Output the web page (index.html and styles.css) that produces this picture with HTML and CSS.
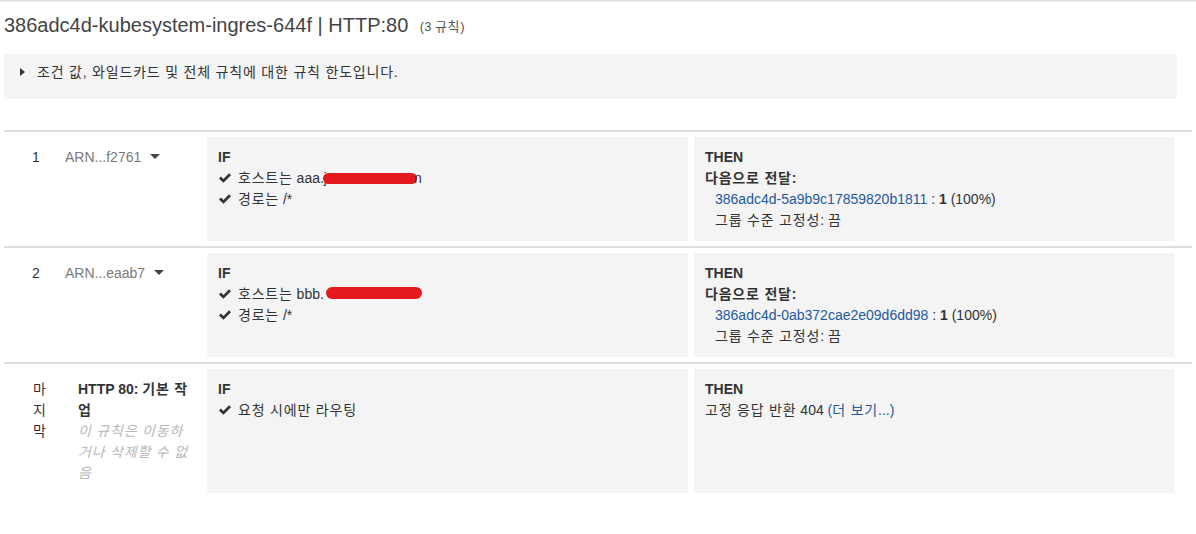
FILE: index.html
```html
<!DOCTYPE html>
<html lang="ko">
<head>
<meta charset="utf-8">
<link rel="stylesheet" href="styles.css">
</head>
<body>
<div class="page">
  <h1 class="title">386adc4d-kubesystem-ingres-644f | HTTP:80 <span class="count">(3 <span class="ko">규칙</span>)</span></h1>
  <div class="info"><span class="tri"></span><span class="ko">조건 값, 와일드카드 및 전체 규칙에 대한 규칙 한도입니다.</span></div>

  <div class="rules">
    <div class="rule">
      <div class="num">1</div>
      <div class="name"><span class="arn">ARN...f2761</span><span class="caret"></span></div>
      <div class="cell">
        <div class="label">IF</div>
        <div class="cond"><svg class="check" viewBox="0 0 12 10"><path d="M0 5.4 L1.9 3.5 L4.4 6 L10.1 0.3 L12 2.2 L4.4 9.8 Z" /></svg><span class="ko">호스트는</span> aaa.j<span class="redact r1"></span><span class="tail">n</span></div>
        <div class="cond"><svg class="check" viewBox="0 0 12 10"><path d="M0 5.4 L1.9 3.5 L4.4 6 L10.1 0.3 L12 2.2 L4.4 9.8 Z" /></svg><span class="ko">경로는</span> /*</div>
      </div>
      <div class="cell">
        <div class="label">THEN</div>
        <div class="strong"><span class="ko">다음으로 전달</span>:</div>
        <div class="indent"><a class="link">386adc4d-5a9b9c17859820b1811</a> : <b>1</b> (100%)</div>
        <div class="indent"><span class="ko">그룹 수준 고정성</span>: <span class="ko">끔</span></div>
      </div>
    </div>

    <div class="rule">
      <div class="num">2</div>
      <div class="name"><span class="arn">ARN...eaab7</span><span class="caret"></span></div>
      <div class="cell">
        <div class="label">IF</div>
        <div class="cond"><svg class="check" viewBox="0 0 12 10"><path d="M0 5.4 L1.9 3.5 L4.4 6 L10.1 0.3 L12 2.2 L4.4 9.8 Z" /></svg><span class="ko">호스트는</span> bbb.<span class="redact r2"></span></div>
        <div class="cond"><svg class="check" viewBox="0 0 12 10"><path d="M0 5.4 L1.9 3.5 L4.4 6 L10.1 0.3 L12 2.2 L4.4 9.8 Z" /></svg><span class="ko">경로는</span> /*</div>
      </div>
      <div class="cell">
        <div class="label">THEN</div>
        <div class="strong"><span class="ko">다음으로 전달</span>:</div>
        <div class="indent"><a class="link">386adc4d-0ab372cae2e09d6dd98</a> : <b>1</b> (100%)</div>
        <div class="indent"><span class="ko">그룹 수준 고정성</span>: <span class="ko">끔</span></div>
      </div>
    </div>

    <div class="rule last">
      <div class="num ko">마지막</div>
      <div class="name default">
        <div class="strong">HTTP 80: <span class="ko">기본 작</span><span class="ko">업</span></div>
        <div class="note ko">이 규칙은 이동하거나 삭제할 수 없음</div>
      </div>
      <div class="cell">
        <div class="label">IF</div>
        <div class="cond"><svg class="check" viewBox="0 0 12 10"><path d="M0 5.4 L1.9 3.5 L4.4 6 L10.1 0.3 L12 2.2 L4.4 9.8 Z" /></svg><span class="ko">요청 시에만 라우팅</span></div>
      </div>
      <div class="cell">
        <div class="label">THEN</div>
        <div><span class="ko">고정 응답 반환</span> 404 <a class="link">(<span class="ko">더 보기</span>...)</a></div>
      </div>
    </div>
  </div>
</div>
</body>
</html>
```

FILE: styles.css
```css
html, body {
  margin: 0;
  padding: 0;
  background: #ffffff;
}

body {
  font-family: "Liberation Sans", Arial, "Noto Sans CJK KR", sans-serif;
  font-size: 14px;
  line-height: 21px;
  color: #333333;
  border-top: 1px solid #dcdcdc;
  box-shadow: inset 0 1px 0 #ececec;
}

.ko {
  letter-spacing: 0.8px;
}

.page {
  margin-left: 4px;
  width: 1188px;
  padding-top: 12px;
}

.title {
  margin: 0;
  font-size: 20px;
  line-height: 24px;
  font-weight: normal;
  color: #444444;
}

.count {
  font-size: 13px;
  color: #555555;
  margin-left: 6px;
  vertical-align: 1px;
}

.count .ko {
  letter-spacing: 0.6px;
}

.info {
  margin-top: 15px;
  width: 1173px;
  height: 45px;
  box-sizing: border-box;
  background: #f4f4f4;
  padding: 8px 16px 16px 16px;
  line-height: 21px;
  color: #333333;
  display: flex;
  align-items: flex-start;
}

.tri {
  width: 0;
  height: 0;
  border-top: 4.5px solid transparent;
  border-bottom: 4.5px solid transparent;
  border-left: 5px solid #333333;
  margin-top: 6px;
  margin-right: 12px;
  flex: none;
}

.rules {
  margin-top: 31px;
}

.rule {
  display: flex;
  border-top: 2px solid #dedede;
  padding: 5px 0;
}

.num {
  width: 56px;
  box-sizing: border-box;
  padding: 10px 0 0 28px;
  flex: none;
  word-break: break-all;
}

.rule.last .num {
  padding-left: 29px;
  padding-right: 12px;
  letter-spacing: 0;
}

.name {
  width: 141px;
  box-sizing: border-box;
  padding: 10px 8px 9px 5px;
  flex: none;
}

.name.default {
  padding-left: 18px;
  padding-right: 9px;
}

.arn {
  color: #7a7a7a;
}

.caret {
  display: inline-block;
  width: 0;
  height: 0;
  border-left: 5px solid transparent;
  border-right: 5px solid transparent;
  border-top: 5px solid #444444;
  margin-left: 9px;
  vertical-align: 3px;
}

.cell {
  background: #f4f4f4;
  box-sizing: border-box;
  padding: 10px 11px;
  flex: none;
  margin-left: 6px;
}

.cell:nth-child(3) {
  width: 481px;
}

.cell:nth-child(4) {
  width: 480px;
}

.label, .strong {
  font-weight: bold;
}

.cond {
  white-space: nowrap;
}

.check {
  display: inline-block;
  width: 12px;
  height: 10px;
  margin: 0 7px 0 1px;
  vertical-align: 0px;
}

.check path {
  fill: #333333;
}

.redact {
  display: inline-block;
  background: #e3191d;
  border-radius: 6px;
}

.r1 {
  width: 94px;
  height: 11px;
  margin-left: -4px;
  vertical-align: -1px;
}

.tail {
  margin-left: -3px;
  color: #333333;
}

.r2 {
  width: 96px;
  height: 12px;
  margin-left: 2px;
  vertical-align: 0px;
}

.indent {
  padding-left: 10px;
}

.link {
  color: #23599e;
  text-decoration: none;
}

.note {
  font-style: italic;
  color: #b8b8b8;
}
```
